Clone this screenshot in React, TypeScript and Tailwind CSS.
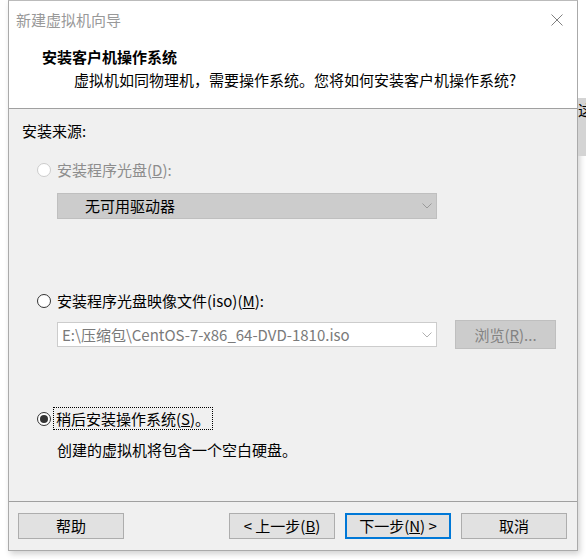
import React from "react";

const font = { fontFamily: '"Noto Sans CJK SC", "Noto Sans", sans-serif' };

function Radio({ checked, disabled }: { checked?: boolean; disabled?: boolean }) {
  return (
    <span
      className={`flex items-center justify-center w-[14px] h-[14px] rounded-full border bg-white shrink-0 ${
        disabled ? "border-[#cccccc]" : "border-[#333333]"
      }`}
    >
      {checked && <span className="w-[8px] h-[8px] rounded-full bg-[#333333]" />}
    </span>
  );
}

function Chevron({ color = "#a0a0a0" }: { color?: string }) {
  return (
    <svg width="10" height="6" viewBox="0 0 10 6" fill="none">
      <path d="M0.5 0.5 L5 5 L9.5 0.5" stroke={color} strokeWidth="1" />
    </svg>
  );
}

function Btn({ children, primary }: { children: React.ReactNode; primary?: boolean }) {
  return (
    <button
      className={`w-[106px] h-[26px] flex items-center justify-center bg-[#e1e1e1] text-[15px] leading-[20px] text-black ${
        primary ? "border-2 border-[#0078d7]" : "border border-[#adadad]"
      }`}
    >
      {children}
    </button>
  );
}

export default function App() {
  return (
    <div className="w-[586px] h-[559px] bg-white flex overflow-hidden" style={font}>
      {/* left gap */}
      <div className="w-[8px] shrink-0" />

      {/* Wizard window */}
      <div className="w-[570px] h-[551px] shrink-0 flex flex-col border border-[#aaaaaa] border-t-[#bbbbbb] shadow-[2px_3px_6px_rgba(0,0,0,0.18)] bg-[#f0f0f0]">
        {/* Title + header */}
        <div className="bg-white h-[108px] flex flex-col border-b border-[#a0a0a0]">
          <div className="h-[38px] flex items-center justify-between pl-[7px] pr-[14px]">
            <span className="text-[15px] leading-[20px] text-[#999999]">新建虚拟机向导</span>
            <svg width="12" height="12" viewBox="0 0 12 12">
              <path d="M0.5 0.5 L11.5 11.5 M11.5 0.5 L0.5 11.5" stroke="#808080" strokeWidth="1" />
            </svg>
          </div>
          <div className="pl-[33px] mt-[8px] text-[15px] leading-[20px] font-bold text-black">
            安装客户机操作系统
          </div>
          <div className="pl-[65px] mt-[3px] text-[15px] leading-[20px] text-black">
            虚拟机如同物理机，需要操作系统。您将如何安装客户机操作系统?
          </div>
        </div>

        {/* Body */}
        <div className="flex-1 flex flex-col pl-[13px] pt-[12px] text-[15px] leading-[20px] text-black">
          <div>安装来源:</div>

          <div className="mt-[19px] flex items-center h-[20px] pl-[15px]">
            <Radio disabled />
            <span className="ml-[6px] text-[#8d8d8d]">
              安装程序光盘(<span className="underline">D</span>):
            </span>
          </div>

          <div className="mt-[13px] ml-[35px] w-[380px] h-[26px] flex items-center justify-between bg-[#cccccc] border border-[#bfbfbf] pl-[27px] pr-[4px]">
            <span>无可用驱动器</span>
            <Chevron color="#9a9a9a" />
          </div>

          <div className="mt-[72px] flex items-center h-[20px] pl-[15px]">
            <Radio />
            <span className="ml-[6px]">
              安装程序光盘映像文件(iso)(<span className="underline">M</span>):
            </span>
          </div>

          <div className="mt-[9px] ml-[35px] h-[29px] flex items-center">
            <div className="w-[380px] h-[25px] flex items-center justify-between bg-white border border-[#cccccc] pl-[4px] pr-[4px]">
              <span className="text-[#7a7a7a]">E:\压缩包\CentOS-7-x86_64-DVD-1810.iso</span>
              <Chevron color="#b0b0b0" />
            </div>
            <div className="ml-[18px] w-[101px] h-[29px] flex items-center justify-center bg-[#cccccc] border border-[#bfbfbf] text-[#838383]">
              浏览(<span className="underline">R</span>)...
            </div>
          </div>

          <div className="mt-[58px] flex items-center h-[23px] pl-[15px]">
            <Radio checked />
            <span className="ml-[2px] h-[23px] flex items-center px-[2px] border border-dotted border-black">
              稍后安装操作系统(<span className="underline">S</span>)。
            </span>
          </div>

          <div className="mt-[10px] pl-[35px]">创建的虚拟机将包含一个空白硬盘。</div>
        </div>

        {/* Footer */}
        <div className="h-[49px] border-t border-[#a0a0a0] flex items-start pt-[11px] pl-[9px] pr-[10px]">
          <Btn>帮助</Btn>
          <div className="flex-1" />
          <Btn>
            &lt; 上一步(<span className="underline">B</span>)
          </Btn>
          <div className="w-[10px]" />
          <Btn primary>
            下一步(<span className="underline">N</span>) &gt;
          </Btn>
          <div className="w-[10px]" />
          <Btn>取消</Btn>
        </div>
      </div>

      {/* desktop strip on the right */}
      <div className="flex-1 flex flex-col">
        <div className="h-[98px] bg-white" />
        <div className="h-[58px] bg-[#d4d4d4] overflow-hidden pt-[2px]">
          <span className="block text-[15px] leading-[20px] text-black">这</span>
        </div>
      </div>
    </div>
  );
}
